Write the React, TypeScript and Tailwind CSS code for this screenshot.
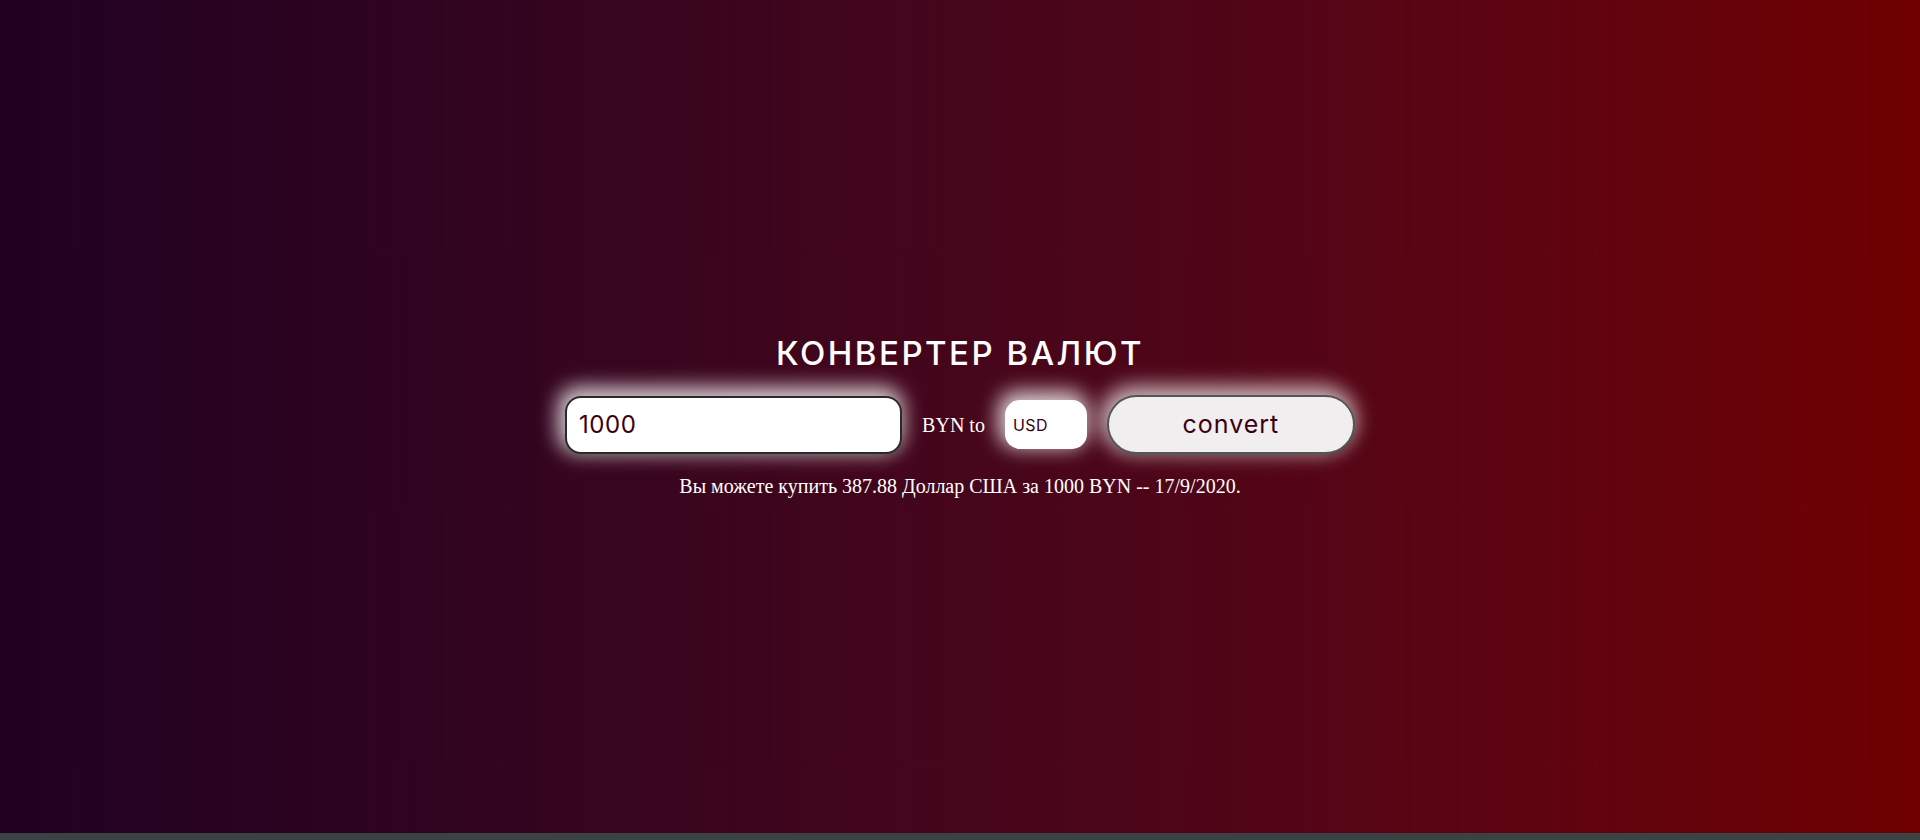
export default function App() {
  return (
    <div className="flex flex-col w-full h-[840px] overflow-hidden">
      <div className="flex flex-col justify-start items-center bg-gradient-to-r from-[#200122] to-[#6f0000] w-full h-[833px] pt-[331px]">
        <h1 className="font-['Inter',sans-serif] font-medium text-[33px] text-white leading-[44px] tracking-[2.5px]">
          КОНВЕРТЕР ВАЛЮТ
        </h1>
        <div className="flex flex-row items-center gap-5 mt-[20px]">
          <input
            readOnly
            value="1000"
            className="bg-white shadow-[-3px_-5px_20px_4px_rgba(255,255,255,0.8),0_2px_3px_rgba(0,0,0,0.5)] px-[12px] border-2 border-[#2a2a2a] rounded-[16px] outline-none w-[337px] h-[58px] font-['Inter',sans-serif] text-[#3b0010] text-[24px] tracking-[0.5px]"
          />
          <span className="font-['Liberation_Serif',serif] text-[20px] text-white">BYN to</span>
          <div className="flex items-center bg-white shadow-[-3px_-5px_20px_4px_rgba(255,255,255,0.8)] px-[8px] rounded-[15px] w-[82px] h-[49px] font-['Inter',sans-serif] text-[#3b0010] text-[16px] tracking-[0.5px]">
            USD
          </div>
          <button className="bg-[#f0eeee] shadow-[-3px_-5px_20px_4px_rgba(255,255,255,0.7),0_2px_3px_rgba(0,0,0,0.5)] border-2 border-[#555] rounded-full w-[248px] h-[59px] font-['Inter',sans-serif] text-[#3b0010] text-[25px] tracking-[1px]">
            convert
          </button>
        </div>
        <p className="mt-[18px] font-['Liberation_Serif',serif] text-[20px] text-white leading-[28px]">
          Вы можете купить 387.88 Доллар США за 1000 BYN -- 17/9/2020.
        </p>
      </div>
      <div className="bg-[#3b4244] w-full h-[7px]" />
    </div>
  );
}
